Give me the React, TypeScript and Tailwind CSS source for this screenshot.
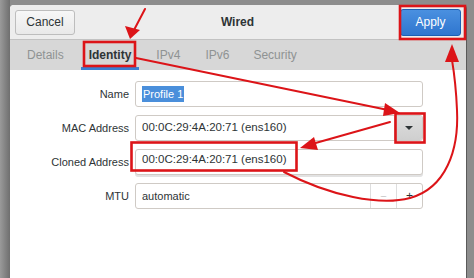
import React from "react";

const RED = "#dc1418";

function Annotations() {
  return (
    <svg
      className="absolute inset-0 pointer-events-none"
      width={474}
      height={278}
      viewBox="0 0 474 278"
    >
      <g fill="none" stroke={RED} strokeWidth={2.6} strokeLinejoin="miter">
        <rect x={84} y={42} width={51} height={24} />
        <rect x={400} y={6} width={65} height={33} />
        <rect x={395.5} y={113.5} width={29} height={29} />
        <rect x={131.5} y={142.5} width={165} height={28} />
      </g>
      <g fill="none" stroke={RED} strokeWidth={2} strokeLinecap="round">
        <line x1={145} y1={9} x2={134} y2={30} />
        <line x1={136} y1={58} x2={388} y2={110} />
        <line x1={390} y1={122} x2={312} y2={144} />
        <path d="M284,172 C330,196 380,206 410,198 C446,188 459,150 457,110 C456,86 454,72 452,60" />
      </g>
      <g fill={RED}>
        <polygon points="130,39 125,26 140,30" />
        <polygon points="400,113 385,103 383,116" />
        <polygon points="300,148 314,137 318,150" />
        <polygon points="452,44 445,62 459,62" />
      </g>
    </svg>
  );
}

function Field({ children, extra }: { children: React.ReactNode; extra?: React.ReactNode }) {
  return (
    <div className="h-[26px] flex items-stretch border border-[#cfcac5] rounded-[3px] bg-white overflow-hidden">
      <div className="flex-1 flex items-center pl-[6px] text-[11px] text-[#2e3436]">{children}</div>
      {extra}
    </div>
  );
}

export default function App() {
  return (
    <div className="relative w-[474px] h-[278px] overflow-hidden bg-[#8d8d8d] font-['Liberation_Sans',Arial,sans-serif]">
      <div className="absolute left-0 top-0 w-[10px] h-full bg-gradient-to-r from-[#9a9a9a] to-[#6f6f6f]" />
      <div className="flex h-full pl-[10px] pt-[5px] pr-[7px]">
        <div className="flex-1 flex flex-col bg-white rounded-t-[4px] overflow-hidden border-r border-[#5a5a5a]">
          {/* header */}
          <div className="h-[35px] shrink-0 bg-[#ededed] border-b border-[#c2c2c2] flex items-center justify-between px-[5px]">
            <div className="w-[60px] h-[25px] flex items-center justify-center rounded-[3px] border border-[#bdbdbd] bg-gradient-to-b from-[#f7f7f7] to-[#e9e9e9] text-[12px] text-[#2e3436]">
              Cancel
            </div>
            <div className="text-[12px] font-bold text-[#2e3436]">Wired</div>
            <div className="w-[61px] h-[27px] flex items-center justify-center rounded-[3px] border border-[#1b5fb4] bg-gradient-to-b from-[#4a90e0] to-[#2f76cf] text-[12px] text-white">
              Apply
            </div>
          </div>
          {/* tabs */}
          <div className="h-[30px] shrink-0 bg-[#d7d7d7] flex items-stretch pl-[8px] gap-[8px] text-[12px]">
            <div className="px-[9px] flex items-center text-[#8f9393]">Details</div>
            <div className="px-[8px] flex items-center font-bold text-[#2e3436] border-b-[3px] border-[#3b7fd1] pt-[3px]">
              Identity
            </div>
            <div className="px-[9px] flex items-center text-[#8f9393]">IPv4</div>
            <div className="px-[8px] flex items-center text-[#8f9393]">IPv6</div>
            <div className="px-[8px] flex items-center text-[#8f9393]">Security</div>
          </div>
          {/* content */}
          <div className="flex-1 bg-white pt-[11px]">
            <div className="grid grid-cols-[119px_288px] gap-x-[6px] gap-y-[8px] items-center">
              <div className="text-right text-[11px] text-[#2e3436]">Name</div>
              <Field>
                <span className="bg-[#4a8fdb] text-white px-[1px]">Profile 1</span>
              </Field>

              <div className="text-right text-[11px] text-[#2e3436]">MAC Address</div>
              <Field
                extra={
                  <div className="w-[28px] border-l border-[#c5c5c5] bg-gradient-to-b from-[#dedede] to-[#cfcfcf] flex items-center justify-center">
                    <div className="w-0 h-0 border-l-[4px] border-r-[4px] border-t-[4px] border-l-transparent border-r-transparent border-t-[#2e3436]" />
                  </div>
                }
              >
                <span className="text-[11.5px]">00:0C:29:4A:20:71 (ens160)</span>
              </Field>

              <div className="text-right text-[11px] text-[#2e3436] pt-[1px]">Cloned Address</div>
              <div className="h-[26px] flex items-start border border-[#cfcac5] rounded-[3px] bg-white pl-[6px] pt-[1px] text-[11.5px] text-[#2e3436] shadow-[0_2px_0_#e2e2e2]">
                00:0C:29:4A:20:71 (ens160)
              </div>

              <div className="text-right text-[11px] text-[#2e3436]">MTU</div>
              <Field
                extra={
                  <>
                    <div className="w-[26px] border-l border-[#dedede] flex items-center justify-center text-[11px] text-[#c8c8c8]">
                      −
                    </div>
                    <div className="w-[26px] border-l border-[#dedede] flex items-center justify-center text-[12px] text-[#2e3436]">
                      +
                    </div>
                  </>
                }
              >
                automatic
              </Field>
            </div>
          </div>
        </div>
      </div>
      <Annotations />
    </div>
  );
}
